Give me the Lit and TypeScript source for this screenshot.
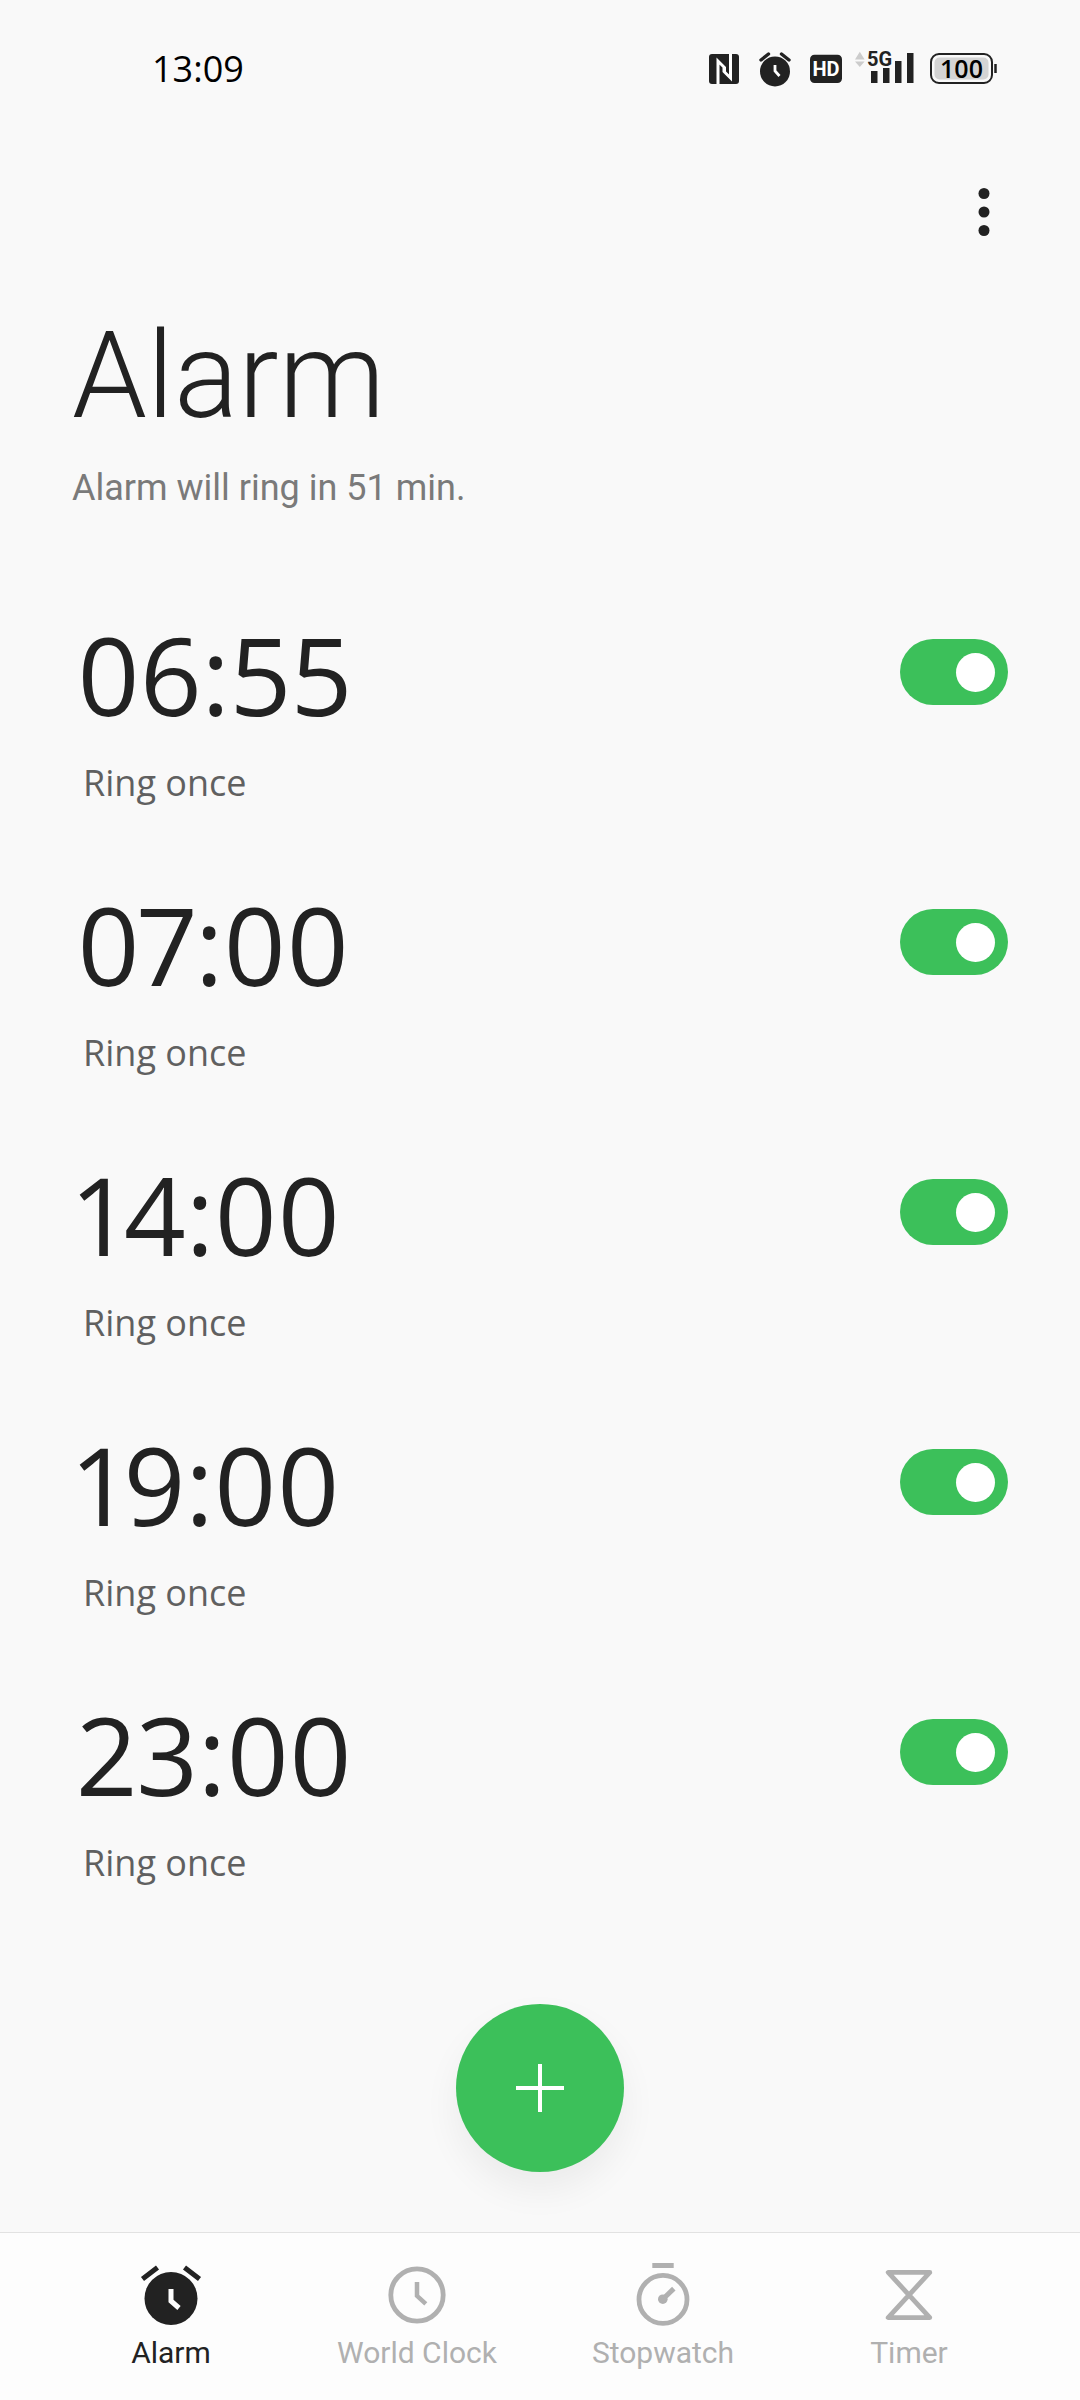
import { LitElement, html, css, svg } from "lit";
import { customElement, property, state } from "lit/decorators.js";
import { classMap } from "lit/directives/class-map.js";

const icons = {
  alarm: svg`
    <circle cx="36" cy="39.5" r="26.5" fill="currentColor" />
    <path d="M7.5 20 22.5 8.5M49.5 8.5 64.5 20" fill="none" stroke="currentColor" stroke-width="5" />
    <path d="M36 30v12l8 7" fill="none" stroke="#fdfdfd" stroke-width="5" />`,
  clock: svg`
    <g fill="none" stroke="currentColor">
      <circle cx="36" cy="36" r="26.2" stroke-width="4.8" />
      <path d="M36 23v13.8l8.8 8" stroke-width="4.5" />
    </g>`,
  stopwatch: svg`
    <rect x="25.3" y="4" width="21.4" height="5" fill="currentColor" />
    <circle cx="36" cy="40.4" r="24" fill="none" stroke="currentColor" stroke-width="4.8" />
    <circle cx="35.8" cy="40.2" r="4.8" fill="currentColor" />
    <path d="M36 40 46.8 29.6" stroke="currentColor" stroke-width="5" />`,
  timer: svg`
    <path d="M15.2 13.4H56.8L15.2 58.6H56.8Z" fill="none" stroke="currentColor" stroke-width="4.8" stroke-linejoin="round" />`,
};

type IconName = keyof typeof icons;

@customElement("status-bar")
class StatusBar extends LitElement {
  static styles = css`
    :host {
      display: flex;
      align-items: center;
      justify-content: space-between;
      padding: 45px 82px 43px 152px;
      color: #000;
    }
    .time {
      font: 500 36px/48px "Open Sans", sans-serif;
    }
    .icons {
      display: flex;
      align-items: center;
      gap: 12px;
      color: #222;
    }
    .glyph {
      display: block;
      height: 48px;
    }
    .badge {
      font: 700 20px "Roboto", sans-serif;
      fill: #fff;
    }
    .network {
      font: 700 20px "Roboto", sans-serif;
      fill: #222;
      stroke: #f9f9f9;
      stroke-width: 3px;
      paint-order: stroke;
    }
    .charge {
      font: 600 25px "Open Sans", sans-serif;
      fill: #000;
    }
  `;

  render() {
    return html`
      <span class="time">13:09</span>
      <div class="icons">
        <svg class="glyph" width="40" viewBox="0 -4 40 48" role="img" aria-label="NFC">
          <rect x="3" y="5" width="30" height="30" rx="3" fill="currentColor" />
          <path d="M12 35V12l6.5 6.5v4M24.5 5v24L18 22.5v-4" fill="none" stroke="#fff" stroke-width="3" />
        </svg>
        <svg class="glyph" width="40" viewBox="0 -4 40 48" role="img" aria-label="Alarm set">
          <circle cx="17" cy="22.4" r="15" fill="currentColor" />
          <path d="M3 11 10.5 5M23.5 5 31 11" fill="none" stroke="currentColor" stroke-width="3.4" stroke-linecap="round" />
          <path d="M17 16v6l4.5 5" fill="none" stroke="#fff" stroke-width="2.8" />
        </svg>
        <svg class="glyph" width="32" viewBox="0 -4 32 48" role="img" aria-label="HD voice">
          <rect y="5.7" width="32" height="28.4" rx="4.5" fill="currentColor" />
          <text class="badge" x="16" y="27" text-anchor="middle">HD</text>
        </svg>
        <svg class="glyph" width="64" viewBox="0 -4 64 48" role="img" aria-label="5G signal, full">
          <path d="M1 10.5 5.8 2.7 10.6 10.5ZM1 12.5h9.6L5.8 18Z" fill="#ccc" />
          <path d="M17 22h6.5v12H17ZM29 19h6.5v15H29ZM41 12h6.5v22H41ZM53 4h6.5v30H53Z" fill="currentColor" />
          <text class="network" x="13" y="17">5G</text>
        </svg>
        <svg class="glyph" width="68" viewBox="0 -4 68 48" role="img" aria-label="Battery 100 percent">
          <rect x="1" y="5" width="61" height="29" rx="8" fill="none" stroke="currentColor" stroke-width="2" />
          <rect x="4.5" y="8.5" width="54" height="22" rx="5" fill="#d4d4d4" />
          <path d="M65.5 15v9" stroke="currentColor" stroke-width="2.5" />
          <text class="charge" x="31.5" y="28.5" text-anchor="middle">100</text>
        </svg>
      </div>
    `;
  }
}

@customElement("alarm-item")
class AlarmItem extends LitElement {
  @property() time = "";
  @property() repeat = "";
  @property({ type: Boolean }) on = false;

  static styles = css`
    :host {
      display: block;
    }
    .row {
      display: flex;
      align-items: flex-start;
      justify-content: space-between;
      padding: 41px 0 37px;
    }
    .text {
      display: flex;
      flex-direction: column;
      gap: 24px;
      cursor: pointer;
    }
    .time {
      padding-left: 5px;
      font: 400 108px/120px "Open Sans", sans-serif;
      font-variant-numeric: proportional-nums;
      color: #222;
    }
    .repeat {
      padding-left: 11px;
      font: 400 36px/48px "Open Sans", sans-serif;
      color: #606060;
    }
    .switch {
      appearance: none;
      display: flex;
      align-items: center;
      box-sizing: border-box;
      width: 108px;
      height: 66px;
      margin: 24px 0 0;
      padding: 0 13px;
      border-radius: 33px;
      background: #d0d0d0;
      cursor: pointer;
    }
    .switch::before {
      content: "";
      width: 39px;
      height: 39px;
      border-radius: 50%;
      background: #fff;
    }
    .switch:checked {
      justify-content: flex-end;
      background: #3cc05a;
    }
  `;

  render() {
    return html`
      <div class="row">
        <label class="text" for="toggle">
          <span class="time">${this.time}</span>
          <span class="repeat">${this.repeat}</span>
        </label>
        <input
          class="switch"
          id="toggle"
          type="checkbox"
          role="switch"
          .checked=${this.on}
          @change=${(e: Event) => (this.on = (e.target as HTMLInputElement).checked)}
        />
      </div>
    `;
  }
}

@customElement("app-root")
class AppRoot extends LitElement {
  @state() private tab = "Alarm";

  private alarms = ["06:55", "07:00", "14:00", "19:00", "23:00"];

  private tabs: { label: string; icon: IconName }[] = [
    { label: "Alarm", icon: "alarm" },
    { label: "World Clock", icon: "clock" },
    { label: "Stopwatch", icon: "stopwatch" },
    { label: "Timer", icon: "timer" },
  ];

  static styles = css`
    :host {
      display: flex;
      flex-direction: column;
      min-height: 100vh;
      background: #f9f9f9;
      color: #222;
      font-family: "Roboto", sans-serif;
    }
    button {
      border: 0;
      padding: 0;
      background: none;
      color: inherit;
      font: inherit;
      cursor: pointer;
    }
    .toolbar {
      display: flex;
      justify-content: flex-end;
      padding: 40px 60px;
    }
    .more {
      display: flex;
      width: 72px;
      height: 72px;
    }
    .heading {
      display: flex;
      flex-direction: column;
      gap: 18px;
      padding: 18px 72px 62px;
    }
    .title {
      margin: 0;
      font-size: 120px;
      line-height: 140px;
      font-weight: 300;
    }
    .next {
      margin: 0;
      font-size: 36px;
      line-height: 48px;
      color: #7a7a7a;
    }
    .list {
      margin: 0;
      padding: 0 72px;
      list-style: none;
    }
    .actions {
      display: flex;
      justify-content: center;
      margin-top: auto;
      padding: 80px 0 60px;
    }
    .add {
      display: flex;
      align-items: center;
      justify-content: center;
      width: 168px;
      height: 168px;
      border-radius: 50%;
      background: #3cc05a;
      box-shadow: 0 18px 36px rgba(0, 0, 0, 0.06);
    }
    .nav {
      display: flex;
      padding: 26px 48px 29px;
      border-top: 1px solid #e2e2e2;
      background: #fdfdfd;
    }
    .tab {
      display: flex;
      flex: 1;
      flex-direction: column;
      align-items: center;
      gap: 4px;
      font-size: 30px;
      line-height: 36px;
      color: #b0b0b0;
    }
    .tab.active {
      color: #222;
    }
  `;

  render() {
    return html`
      <status-bar></status-bar>
      <div class="toolbar">
        <button class="more" aria-label="More options">
          <svg width="72" height="72" viewBox="0 0 72 72" fill="currentColor">
            <circle cx="36" cy="17.5" r="5.5" />
            <circle cx="36" cy="36" r="5.5" />
            <circle cx="36" cy="54.5" r="5.5" />
          </svg>
        </button>
      </div>
      <header class="heading">
        <h1 class="title">Alarm</h1>
        <p class="next">Alarm will ring in 51 min.</p>
      </header>
      <ul class="list">
        ${this.alarms.map(
          (time) => html`<li><alarm-item .time=${time} .repeat=${"Ring once"} .on=${true}></alarm-item></li>`
        )}
      </ul>
      <div class="actions">
        <button class="add" aria-label="Add alarm">
          <svg width="48" height="48" viewBox="0 0 48 48">
            <path d="M24 0v48M0 24h48" stroke="#fff" stroke-width="4" />
          </svg>
        </button>
      </div>
      <nav class="nav">
        ${this.tabs.map(
          ({ label, icon }) => html`
            <button class=${classMap({ tab: true, active: this.tab === label })} @click=${() => (this.tab = label)}>
              <svg width="72" height="72" viewBox="0 0 72 72">${icons[icon]}</svg>
              <span>${label}</span>
            </button>
          `
        )}
      </nav>
    `;
  }
}
